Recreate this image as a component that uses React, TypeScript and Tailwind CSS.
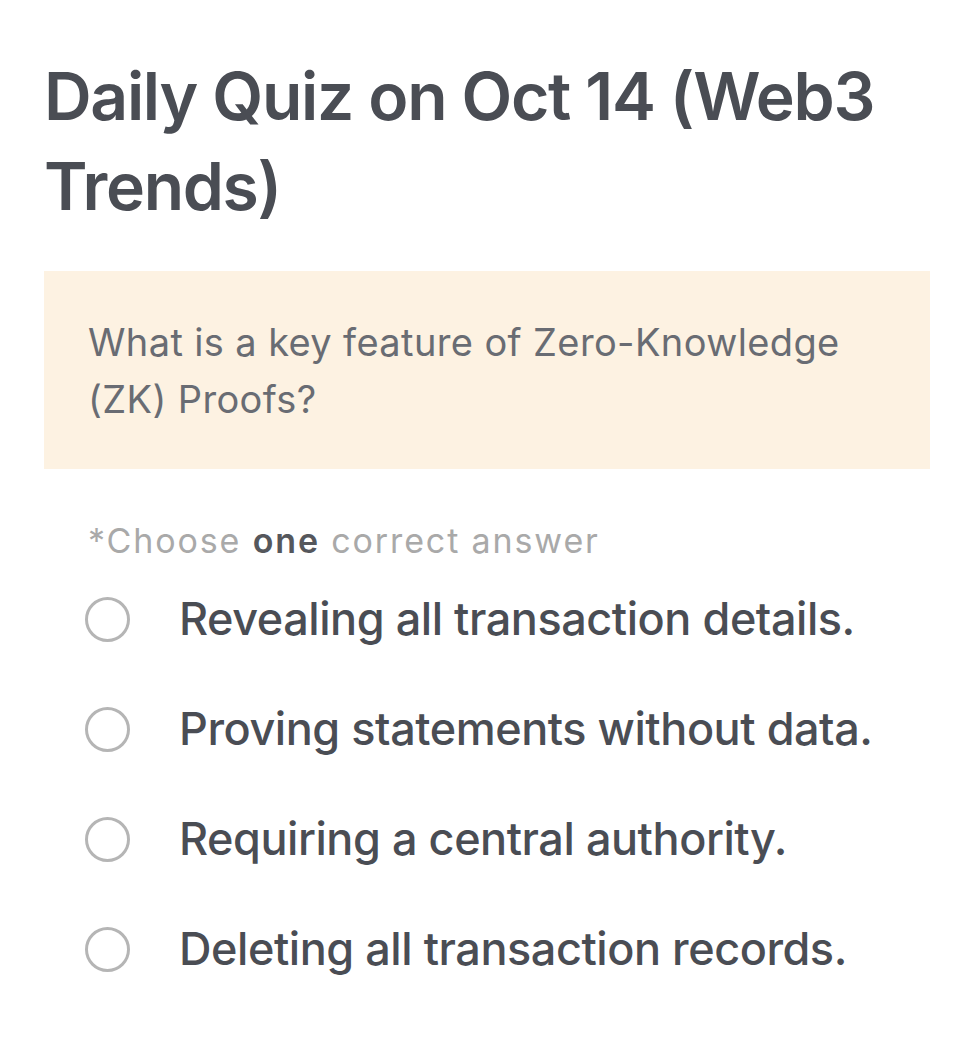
import React from "react";

const options = [
  "Revealing all transaction details.",
  "Proving statements without data.",
  "Requiring a central authority.",
  "Deleting all transaction records.",
];

export default function App() {
  return (
    <div className="w-[972px] h-[1038px] bg-white font-['Inter',sans-serif] pt-[51px] px-[44px] overflow-hidden">
      <h1 className="text-[66px] leading-[90px] font-semibold tracking-[-0.02em] text-[#4a4d54]">
        Daily Quiz on Oct 14 (Web3 Trends)
      </h1>
      <div className="mt-[40px] bg-[#fdf2e2] w-[886px] h-[198px] px-[44px] pt-[43px]">
        <p className="text-[38px] leading-[57px] text-[#696c73] tracking-[0.01em]">
          What is a key feature of Zero-Knowledge (ZK) Proofs?
        </p>
      </div>
      <p className="mt-[50px] pl-[44px] text-[34px] leading-[44px] text-[#a9a9a9] tracking-[0.055em]">
        *Choose <span className="font-semibold text-[#55575c]">one</span> correct answer
      </p>
      <div className="mt-[1px] flex flex-col">
        {options.map((o) => (
          <div key={o} className="flex items-center h-[110px]">
            <div className="ml-[41px] w-[45px] h-[45px] rounded-full border-[3px] border-[#b5b5b5]" />
            <span className="ml-[49px] text-[45px] leading-[56px] font-medium text-[#4a4d54] tracking-[-0.01em]">
              {o}
            </span>
          </div>
        ))}
      </div>
    </div>
  );
}
